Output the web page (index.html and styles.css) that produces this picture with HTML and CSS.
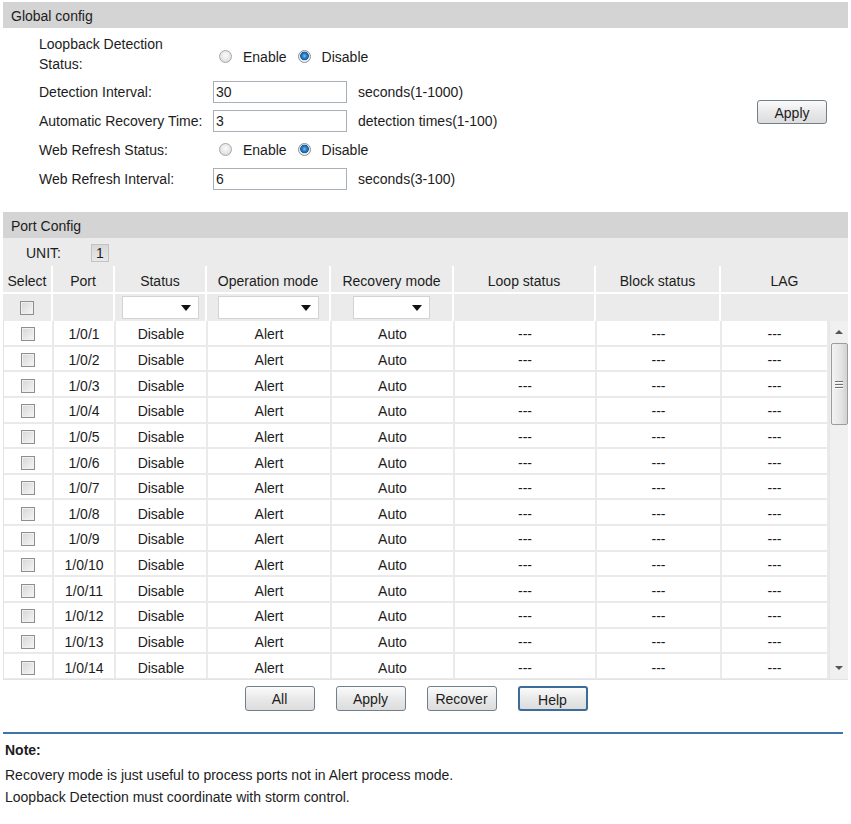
FILE: index.html
```html
<!DOCTYPE html>
<html>
<head>
<meta charset="utf-8">
<title>Loopback Detection</title>
<link rel="stylesheet" href="styles.css">
</head>
<body>
<div class="page">
  <div class="bar">Global config</div>
  <div class="global">
    <div class="form">
      <div class="frow tall">
        <div class="lbl">Loopback Detection Status:</div>
        <div class="val low"><span class="radio"></span><span class="rtxt">Enable</span><span class="radio on"></span><span class="rtxt">Disable</span></div>
      </div>
      <div class="frow">
        <div class="lbl">Detection Interval:</div>
        <div class="val"><input class="txt" type="text" value="30"><span class="hint">seconds(1-1000)</span></div>
      </div>
      <div class="frow">
        <div class="lbl">Automatic Recovery Time:</div>
        <div class="val"><input class="txt" type="text" value="3"><span class="hint">detection times(1-100)</span></div>
      </div>
      <div class="frow">
        <div class="lbl">Web Refresh Status:</div>
        <div class="val"><span class="radio"></span><span class="rtxt">Enable</span><span class="radio on"></span><span class="rtxt">Disable</span></div>
      </div>
      <div class="frow">
        <div class="lbl">Web Refresh Interval:</div>
        <div class="val"><input class="txt" type="text" value="6"><span class="hint">seconds(3-100)</span></div>
      </div>
    </div>
    <div class="apply-cell"><button class="btn">Apply</button></div>
  </div>

  <div class="bar">Port Config</div>
  <div class="unitrow"><span>UNIT:</span><span class="ubox">1</span></div>
  <div class="grid head">
    <div>Select</div><div>Port</div><div>Status</div><div>Operation mode</div><div>Recovery mode</div><div>Loop status</div><div>Block status</div><div>LAG</div>
  </div>
  <div class="grid filter">
    <div><span class="cb"></span></div><div></div>
    <div><span class="sel w77"></span></div>
    <div><span class="sel w100"></span></div>
    <div><span class="sel w77"></span></div>
    <div></div><div></div><div></div>
  </div>
  <div class="tbody-wrap">
    <div class="tbody">
      <div class="grid drow"><div><span class="cb"></span></div><div>1/0/1</div><div>Disable</div><div>Alert</div><div>Auto</div><div>---</div><div>---</div><div>---</div></div>
      <div class="grid drow"><div><span class="cb"></span></div><div>1/0/2</div><div>Disable</div><div>Alert</div><div>Auto</div><div>---</div><div>---</div><div>---</div></div>
      <div class="grid drow"><div><span class="cb"></span></div><div>1/0/3</div><div>Disable</div><div>Alert</div><div>Auto</div><div>---</div><div>---</div><div>---</div></div>
      <div class="grid drow"><div><span class="cb"></span></div><div>1/0/4</div><div>Disable</div><div>Alert</div><div>Auto</div><div>---</div><div>---</div><div>---</div></div>
      <div class="grid drow"><div><span class="cb"></span></div><div>1/0/5</div><div>Disable</div><div>Alert</div><div>Auto</div><div>---</div><div>---</div><div>---</div></div>
      <div class="grid drow"><div><span class="cb"></span></div><div>1/0/6</div><div>Disable</div><div>Alert</div><div>Auto</div><div>---</div><div>---</div><div>---</div></div>
      <div class="grid drow"><div><span class="cb"></span></div><div>1/0/7</div><div>Disable</div><div>Alert</div><div>Auto</div><div>---</div><div>---</div><div>---</div></div>
      <div class="grid drow"><div><span class="cb"></span></div><div>1/0/8</div><div>Disable</div><div>Alert</div><div>Auto</div><div>---</div><div>---</div><div>---</div></div>
      <div class="grid drow"><div><span class="cb"></span></div><div>1/0/9</div><div>Disable</div><div>Alert</div><div>Auto</div><div>---</div><div>---</div><div>---</div></div>
      <div class="grid drow"><div><span class="cb"></span></div><div>1/0/10</div><div>Disable</div><div>Alert</div><div>Auto</div><div>---</div><div>---</div><div>---</div></div>
      <div class="grid drow"><div><span class="cb"></span></div><div>1/0/11</div><div>Disable</div><div>Alert</div><div>Auto</div><div>---</div><div>---</div><div>---</div></div>
      <div class="grid drow"><div><span class="cb"></span></div><div>1/0/12</div><div>Disable</div><div>Alert</div><div>Auto</div><div>---</div><div>---</div><div>---</div></div>
      <div class="grid drow"><div><span class="cb"></span></div><div>1/0/13</div><div>Disable</div><div>Alert</div><div>Auto</div><div>---</div><div>---</div><div>---</div></div>
      <div class="grid drow"><div><span class="cb"></span></div><div>1/0/14</div><div>Disable</div><div>Alert</div><div>Auto</div><div>---</div><div>---</div><div>---</div></div>
    </div>
    <div class="sbar">
      <div class="sarrow"><span class="tri-up"></span></div>
      <div class="thumb"><span class="grip"></span><span class="grip"></span><span class="grip"></span></div>
      <div class="sfill"></div>
      <div class="sarrow"><span class="tri-down"></span></div>
    </div>
  </div>
  <div class="actions">
    <button class="btn">All</button>
    <button class="btn">Apply</button>
    <button class="btn">Recover</button>
    <button class="btn focus">Help</button>
  </div>
  <div class="rule"></div>
  <div class="note">
    <div class="ntitle">Note:</div>
    <div>Recovery mode is just useful to process ports not in Alert process mode.</div>
    <div>Loopback Detection must coordinate with storm control.</div>
  </div>
</div>
</body>
</html>
```

FILE: styles.css
```css
* { box-sizing: border-box; }

body {
  margin: 0;
  padding: 2px 3px 0;
  font-family: "Liberation Sans", Arial, sans-serif;
  font-size: 14px;
  color: #1c1c1c;
  background: #fff;
}

.page { width: 845px; }

.bar {
  height: 26px;
  line-height: 26px;
  padding-top: 1px;
  background: #d4d4d4;
  padding-left: 8px;
}

/* Global config */
.global {
  display: flex;
  padding: 3px 0 19px;
}
.form { padding-left: 36px; }
.frow {
  display: flex;
  align-items: center;
  height: 29px;
}
.frow.tall { height: 46px; }
.lbl {
  width: 174px;
  padding-right: 8px;
  line-height: 20px;
}
.val {
  display: flex;
  align-items: center;
}
.val.low { padding-top: 5px; }
.txt {
  width: 134px;
  height: 22px;
  border: 1px solid #a9b0b8;
  padding: 0 2px;
  font: inherit;
  color: #1c1c1c;
  line-height: 20px;
  outline: none;
}
.hint { margin-left: 11px; }

.radio {
  width: 13px;
  height: 13px;
  border-radius: 50%;
  border: 1px solid #a7a7a7;
  background: radial-gradient(circle at 50% 40%, #fbfbfb 0, #e6e6e6 55%, #cfcfcf 100%);
  margin-left: 6px;
  margin-right: 11px;
}
.radio.on {
  border-color: #8a8f96;
  background: radial-gradient(circle at 50% 45%, #7cc4f5 0, #2a86d3 2px, #1a5a9a 4px, #e3e3e3 4.6px, #f4f4f4 6px);
  margin-left: 11px;
}
.rtxt { display: inline-block; }

.apply-cell {
  flex: 1;
  display: flex;
  align-items: center;
  justify-content: flex-end;
  padding-right: 21px;
}

.btn {
  width: 70px;
  height: 25px;
  font: inherit;
  color: #1c1c1c;
  border: 1px solid #6f7f90;
  border-radius: 3px;
  background: linear-gradient(#fbfbfb, #e9e9e9 50%, #dcdcdc);
  padding: 1px 0 0;
}
.apply-cell .btn { height: 24px; }
.btn.focus {
  border: 2px solid #3a6d9c;
  padding-top: 3px;
}

/* Port config */
.unitrow {
  height: 28px;
  background: #ebebeb;
  display: flex;
  align-items: center;
  padding-left: 23px;
  padding-top: 1px;
}
.ubox {
  width: 18px;
  height: 18px;
  margin-left: 30px;
  border: 1px solid #c3c3c3;
  background: linear-gradient(#d8d8d8, #e8e8e8);
  text-align: center;
  line-height: 16px;
}

.grid {
  display: grid;
  grid-template-columns: 50px 62px 92px 124px 123px 142px 125px 1fr;
}
.grid > div {
  display: flex;
  align-items: center;
  justify-content: center;
  height: 100%;
}

.head {
  height: 28px;
  background: #ebebeb;
  border-bottom: 2px solid #fff;
}
.head > div { padding-top: 3px; }
.head > div,
.filter > div { border-right: 2px solid #fff; }
.head > div:last-child,
.filter > div:last-child { border-right: none; }

.filter {
  height: 27px;
  background: #ebebeb;
}

.cb {
  width: 14px;
  height: 14px;
  border: 1px solid #8e8e8e;
  background: linear-gradient(135deg, #d6d6d6, #f6f6f6);
  box-shadow: inset 0 0 0 1px #f0f0f0;
}

.sel {
  height: 23px;
  background: #fff;
  border: 1px solid #d3d3d3;
  display: flex;
  align-items: center;
  justify-content: flex-end;
  padding-right: 7px;
}
.sel::after {
  content: "";
  border-left: 5px solid transparent;
  border-right: 5px solid transparent;
  border-top: 6px solid #111;
}
.w77 { width: 77px; }
.w100 { width: 101px; }

.tbody-wrap {
  display: flex;
  height: 359px;
  border-bottom: 1px solid #e3e3e3;
}
.tbody {
  width: 826px;
  overflow: hidden;
  border-left: 1px solid #e3e3e3;
}
.drow {
  height: 25.65px;
  border-bottom: 2px solid #eaeaea;
}
.drow > div {
  border-right: 2px solid #eaeaea;
  padding-top: 3px;
}

.sbar {
  width: 19px;
  background: #f0f0f0;
  border-left: 1px solid #e6e6e6;
  display: flex;
  flex-direction: column;
  align-items: center;
}
.sarrow {
  height: 22px;
  width: 100%;
  display: flex;
  align-items: center;
  justify-content: center;
}
.tri-up {
  border-left: 4px solid transparent;
  border-right: 4px solid transparent;
  border-bottom: 4px solid #555;
}
.tri-down {
  border-left: 4px solid transparent;
  border-right: 4px solid transparent;
  border-top: 4px solid #555;
}
.thumb {
  width: 17px;
  height: 82px;
  border: 1px solid #9c9c9c;
  border-radius: 2px;
  background: linear-gradient(90deg, #f3f3f3, #e4e4e4 60%, #d2d2d2);
  display: flex;
  flex-direction: column;
  align-items: center;
  justify-content: center;
  gap: 2px;
}
.grip {
  width: 8px;
  height: 1px;
  background: #6f6f6f;
  box-shadow: 0 1px 0 #fdfdfd;
}
.sfill { flex: 1; }

.actions {
  width: 826px;
  display: flex;
  justify-content: center;
  gap: 21px;
  margin-top: 6px;
}

.rule {
  width: 840px;
  height: 2px;
  background: #3d75aa;
  margin-top: 21px;
}
.note {
  padding: 5px 2px 0;
  line-height: 22px;
}
.ntitle {
  font-weight: bold;
  margin-bottom: 3px;
}
```
